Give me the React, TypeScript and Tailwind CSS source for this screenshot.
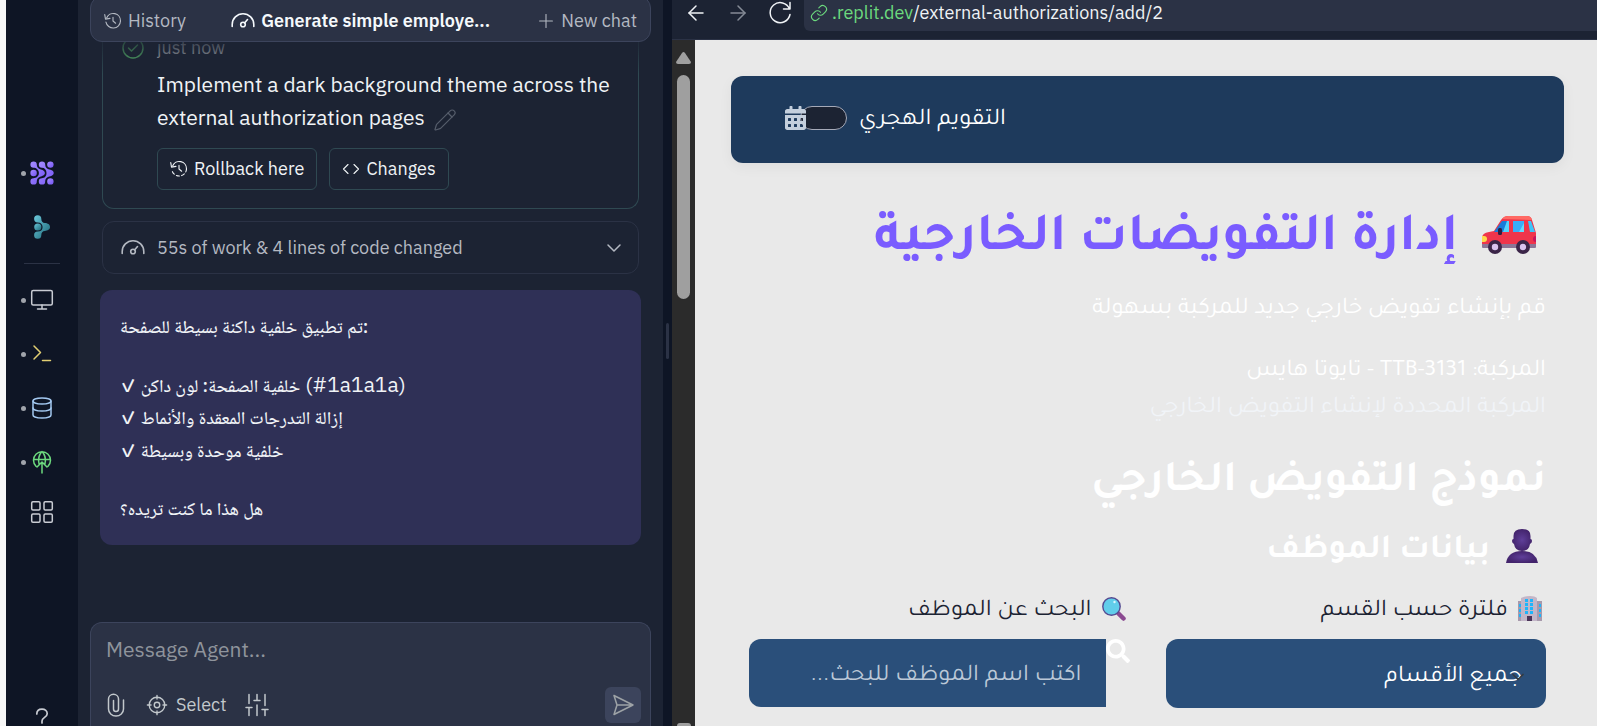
import type { ReactNode, SVGProps } from "react";
import { ArrowLeft, ArrowRight, ChevronDown, Database, Link, Pencil, Plus, RotateCw } from "lucide-react";
import { FaCalendarAlt, FaSearch } from "react-icons/fa";

function Icon({ children, ...props }: SVGProps<SVGSVGElement>) {
  return (
    <svg viewBox="0 0 24 24" fill="none" stroke="currentColor" strokeWidth="1.5" strokeLinecap="round" strokeLinejoin="round" aria-hidden="true" {...props}>
      {children}
    </svg>
  );
}

const HistoryIcon = ({ className, dashed }: { className: string; dashed?: boolean }) => (
  <Icon className={className}>
    <path d="M3.5 8A9.6 9.6 0 0 1 22 12" />
    <path d="M22 12A9.8 9.8 0 0 1 2.600 13.500" strokeDasharray={dashed ? "4 3.2" : undefined} />
    <path d="M1 3.500l1 6 6-1M12 7V12l3.5 3" />
  </Icon>
);

const GaugeIcon = ({ className }: { className: string }) => (
  <Icon className={className} strokeWidth="1.6">
    <path d="M1.200 17.500v-2a10.800 10.800 0 0 1 21.600 0v2" />
    <circle cx="12" cy="15.500" r="2.300" />
    <path d="m13.700 13.800 2.800-3.300" />
  </Icon>
);

const AgentIcon = () => (
  <svg viewBox="0 0 24 24" className="size-6" aria-hidden="true">
    <defs>
      <linearGradient id="agent" x1="0" y1="0" x2="1" y2="1">
        <stop offset="0" stopColor="#a58cff" />
        <stop offset="1" stopColor="#7455f5" />
      </linearGradient>
    </defs>
    <g fill="url(#agent)">
      <path d="M3.6.4a3.2 3.2 0 0 1 3.2 3.2c0 2.4 1.2 3.9 3.3 4.7 2.1.6 4.8 1.5 4.8 3.7s-2.700 3.100-4.800 3.700c-2.100.8-3.300 2.300-3.300 4.700a3.200 3.200 0 1 1-3.200-3.200c2.600 0 5.300-2 5.300-5.200S6.200 6.800 3.600 6.800a3.200 3.200 0 0 1 0-6.400Z" />
      <path d="M12 .4a3.200 3.200 0 0 1 3.200 3.200c0 2.400 1.200 3.900 3.300 4.700 2.500.6 5.200 1.200 5.200 3.700s-2.700 3.100-5.200 3.700c-2.100.8-3.300 2.300-3.300 4.700a3.200 3.200 0 1 1-3.200-3.200c2.600 0 4.500-2 4.500-5.200S14.600 6.800 12 6.800A3.200 3.200 0 0 1 12 .4Z" />
      <circle cx="3.600" cy="12" r="3.200" />
      <circle cx="20.400" cy="3.600" r="3.200" />
      <circle cx="20.400" cy="20.400" r="3.200" />
    </g>
  </svg>
);

const AssistantIcon = () => (
  <svg viewBox="0 0 16 24" className="h-6 w-4" aria-hidden="true">
    <defs>
      <linearGradient id="assistant" x1="0" y1="0" x2="1" y2="1">
        <stop offset="0" stopColor="#6cc9dc" />
        <stop offset="1" stopColor="#1c6675" />
      </linearGradient>
    </defs>
    <g fill="url(#assistant)">
      <path d="M3.700.2a3.600 3.600 0 0 1 3.600 3.600c0 2.500 1.300 4.200 3.500 4.300 2.800.2 5.200 1.400 5.200 3.900s-2.400 3.700-5.200 3.900c-2.200.1-3.500 1.800-3.500 4.300a3.600 3.600 0 1 1-3.600-3.600c3 0 4.900-1.700 4.900-4.600s-1.900-4.600-4.900-4.600a3.600 3.600 0 0 1 0-7.200Z" />
      <circle cx="3.800" cy="12" r="3.600" />
    </g>
  </svg>
);

function RailItem({ label, dot, children }: { label: string; dot?: boolean; children: ReactNode }) {
  return (
    <button aria-label={label} className="relative flex h-[54px] w-full shrink-0 items-center justify-center">
      {dot && <span className="absolute left-[15px] size-[5px] rounded-full bg-[#a0a4ab]" />}
      {children}
    </button>
  );
}

function Rail() {
  return (
    <nav aria-label="Tools" className="flex w-[72px] shrink-0 flex-col bg-[#0e1525] pt-[146px] text-[#c9ccd3]">
      <RailItem label="Agent" dot><AgentIcon /></RailItem>
      <RailItem label="Assistant"><AssistantIcon /></RailItem>
      <hr className="mx-auto my-[9px] w-9 border-[#2b3245]" />
      <RailItem label="Preview" dot><Icon className="size-6"><rect x="1.700" y="2.500" width="20.600" height="14.500" rx="1.500" /><path d="M12 17v4M7.500 21h9" /></Icon></RailItem>
      <RailItem label="Console" dot><Icon className="size-6 text-[#e2cf73]"><path d="m4 4 6.500 6.500L4 17M12.500 18.500h8" /></Icon></RailItem>
      <RailItem label="Database" dot><Database className="size-6 text-[#a3c8f0]" strokeWidth={1.5} /></RailItem>
      <RailItem label="Deployments" dot>
        <Icon className="size-6 text-[#6cd97e]">
          <path d="M6 16.200A8.500 8.500 0 1 1 18 16.200M3.800 9.500h16.400M9.200 14.500C8 9.500 9 4.500 12 1.500c3 3 4 8 2.800 13M12 23V12.500M7 17l5-5 5 5" />
        </Icon>
      </RailItem>
      <div className="-mt-1">
        <RailItem label="All tools"><Icon className="size-6"><rect x="1.700" y="1.700" width="8.300" height="8.300" rx="1.200" /><rect x="14" y="1.700" width="8.300" height="8.300" rx="1.200" /><rect x="1.700" y="14" width="8.300" height="8.300" rx="1.200" /><rect x="14" y="14" width="8.300" height="8.300" rx="1.200" /></Icon></RailItem>
      </div>
      <div className="mt-auto -mb-5">
        <RailItem label="Help"><Icon className="size-6" strokeWidth="1.700"><path d="M6.800 7c0-3 2.200-4.800 5.200-4.800s5.200 1.800 5.200 4.500c0 3.600-5.200 3.800-5.200 7.300V16M12 20.500v.5" /></Icon></RailItem>
      </div>
    </nav>
  );
}

const answers = [
  { text: "خلفية الصفحة: لون داكن", code: "(#1a1a1a)" },
  { text: "إزالة التدرجات المعقدة والأنماط" },
  { text: "خلفية موحدة وبسيطة" },
];

function ChatPanel() {
  return (
    <section aria-label="Agent chat" className="flex w-[585px] shrink-0 flex-col bg-[#1c2333] px-3 font-['IBM_Plex_Sans','Noto_Sans','DejaVu_Sans',sans-serif] text-lg">
      <header className="z-10 -mt-1 flex h-[46px] shrink-0 items-center justify-between rounded-xl border border-[#3c445c] bg-[#2b3245] px-[13px] pt-1 text-[#b4b9c2]">
        <button className="flex items-center gap-1.5"><HistoryIcon className="size-[18px]" />History</button>
        <h1 className="flex items-center gap-1.5 font-semibold text-[#f5f9fc]"><GaugeIcon className="size-6" />Generate simple employe...</h1>
        <button className="flex items-center gap-1"><Plus className="size-[22px]" strokeWidth={1.2} />New chat</button>
      </header>
      <div className="relative flex min-h-0 grow flex-col overflow-hidden px-3">
        <article className="shrink-0 rounded-b-xl border border-t-0 border-[#2f4952] pr-5 pb-[18px] pl-[18px]">
          <div className="-mt-2 flex h-7 items-center gap-3 text-[#b8bdc1]">
            <Icon className="size-6 text-[#5cc470]"><circle cx="12" cy="12" r="10" /><path d="m7.500 12 3 3 6-6" /></Icon>
            just now
          </div>
          <div className="pl-9">
            <p className="pt-1.5 text-[21px] leading-[33px] text-[#f0f3f6]">
              Implement a dark background theme across the external authorization pages
              <button aria-label="Edit" className="ml-2 inline-block align-middle text-[#565d6b]"><Pencil className="size-6" strokeWidth={1.2} /></button>
            </p>
            <div className="mt-3.5 flex gap-3 text-[#f0f3f6]">
              <button className="flex h-[42px] items-center gap-1.5 rounded-md border border-[#2f4952] px-3"><HistoryIcon className="size-[18px]" dashed />Rollback here</button>
              <button className="flex h-[42px] items-center gap-1.5 rounded-md border border-[#2f4952] px-3"><Icon className="size-[18px]"><path d="m8 6-6 6 6 6M16 6l6 6-6 6" /></Icon>Changes</button>
            </div>
          </div>
        </article>
        <button className="mt-3 flex h-[53px] shrink-0 items-center gap-3 rounded-xl border border-[#2b3245] px-[18px] text-[#b4b9c2]">
          <GaugeIcon className="size-6" />
          55s of work &amp; 4 lines of code changed
          <ChevronDown className="-mr-1.5 ml-auto size-6" strokeWidth={1.5} />
        </button>
        <article className="-mx-0.5 mt-4 shrink-0 rounded-xl bg-[#2f3056] px-5 py-5 font-['IBM_Plex_Sans','Noto_Naskh_Arabic','Amiri','DejaVu_Sans',sans-serif] text-lg leading-[33px] font-medium text-[#f0f3f6]">
          <p>تم تطبيق خلفية داكنة بسيطة للصفحة:</p>
          <ul className="my-[25px]">
            {answers.map(({ text, code }) => (
              <li key={text} className="h-[33px]">✓ {text}{code && <span className="text-[21px] font-normal"> {code}</span>}</li>
            ))}
          </ul>
          <p>هل هذا ما كنت تريده؟</p>
        </article>
        <div className="pointer-events-none absolute inset-x-0 top-0 h-8 bg-linear-to-b from-[#1c2333]/80 to-transparent" />
      </div>
      <form className="shrink-0 rounded-t-xl border border-b-0 border-[#3c445c] bg-[#2b3245] px-[15px] pt-2.5">
        <input aria-label="Message Agent" placeholder="Message Agent..." className="block h-8 w-full bg-transparent text-[21px] text-white outline-none placeholder:text-[#8f949c]" />
        <div className="-mr-1.5 mt-[22px] flex h-[39px] items-start text-[#c2c8cc]">
          <button type="button" aria-label="Attach" className="flex h-9 items-center"><Icon className="-ml-0.5 size-6"><path d="M19.500 7v9a7.500 7 0 0 1-15 0V6a5 4.700 0 0 1 10 0v10a2.500 2.500 0 0 1-5 0V7.500" /></Icon></button>
          <button type="button" className="ml-[18px] flex h-9 items-center gap-2">
            <Icon className="size-[22px]"><circle cx="12" cy="12" r="8.500" /><circle cx="12" cy="12" r="3" /><path d="M12 1.500v4M12 18.500v4M1.500 12h4M18.500 12h4" /></Icon>Select
          </button>
          <button type="button" aria-label="Settings" className="ml-[18px] flex h-9 items-center"><Icon className="size-6"><path d="M4 1.500v9M4 15v7.500M12 1.500V7M12 12v10.500M20 1.500v11M20 17v5.500M1 14.500h6M9 7.500h6M17 16.500h6" /></Icon></button>
          <button aria-label="Send" className="ml-auto flex size-9 items-center justify-center rounded-md bg-[#3c445c] text-[#9da2a6]"><Icon className="size-6"><path d="m3 2.500 19 9.500L3 21.500 6 12ZM6 12h16" /></Icon></button>
        </div>
      </form>
    </section>
  );
}

const Car = () => (
  <svg viewBox="0 0 54 38" className="h-[38px] w-[54px]" aria-hidden="true">
    <path d="M19 4Q22 0 26 0h19q4 0 5 4l4 13v12H0V22q0-5 7-6l5-1Z" fill="#ef354b" />
    <path d="M20 3q2-3 6-3h19q4 0 5 4Z" fill="#ff6a64" />
    <path d="M12 16 20 5h7v11Z" fill="#187bd8" /><path d="m21 16 4-11h2v11Z" fill="#55d3fb" />
    <path d="M31 5h11v11H31Z" fill="#39aef8" /><path d="m37 16 5-9v9Z" fill="#65dcfd" /><path d="M46 5h3l4 11h-5Z" fill="#3cc5fa" />
    <path d="M0 28h54v3q0 1-1 1H1q-1 0-1-1Z" fill="#8c7596" />
    <path d="M0 20h2q3 0 3 3t-3 3H0Z" fill="#ffd84a" /><path d="M54 20q-3 0-3 3t3 3Z" fill="#c8145e" />
    <rect x="16" y="12" width="4" height="7" rx="1.500" fill="#302040" />
    <g fill="#3b2548"><circle cx="13" cy="31" r="7" /><circle cx="41" cy="31" r="7" /></g>
    <g fill="#d9c3f0"><circle cx="13" cy="31" r="3.200" /><circle cx="41" cy="31" r="3.200" /></g>
  </svg>
);

const Person = () => (
  <svg viewBox="0 0 32 34" className="mb-2 h-[34px] w-8" aria-hidden="true">
    <defs><radialGradient id="person"><stop offset="0" stopColor="#5f3f99" /><stop offset="1" stopColor="#43246c" /></radialGradient></defs>
    <g fill="url(#person)"><path d="M7.500 7q0-7 8.500-7t8.500 7v3q1.500 0 1.500 2t-2 3q-1 7-8 7t-8-7q-2-1-2-3t1.500-2Z" /><path d="M0 34q2-12 16-12t16 12Z" /></g>
  </svg>
);

const Building = () => (
  <svg viewBox="0 0 24 26" className="h-[26px] w-6" aria-hidden="true">
    <path d="M0 5h5v20H0ZM19 5h5v20h-5Z" fill="#a89aac" /><path d="M3 2Q7 0 12 0t7 2v23H3Z" fill="#c3b6c8" />
    <path d="M7 3h3v3H7Zm5 0h3v3h-3ZM7 7h3v3H7Zm5 0h3v3h-3Zm-5 4h3v3H7Zm5 0h3v3h-3Zm-5 4h3v3H7Zm5 0h3v3h-3ZM1 8h2v3H1Zm0 5h2v3H1Zm0 5h2v3H1ZM21 8h2v3h-2Zm0 5h2v3h-2Zm0 5h2v3h-2Z" fill="#20b5fa" />
    <path d="M9 20h5v5H9Z" fill="#4b3459" />
  </svg>
);

const Magnifier = () => (
  <svg viewBox="0 0 24 24" className="size-6" aria-hidden="true">
    <path d="m16.500 16.500 5 5" stroke="#8b4a91" strokeWidth="4.500" strokeLinecap="round" />
    <circle cx="9.500" cy="9.500" r="8.700" fill="#61cdea" stroke="#544a91" strokeWidth="1.400" /><circle cx="12.500" cy="5" r="1.200" fill="#d9f7ff" />
  </svg>
);

function AuthorizationPage() {
  return (
    <main dir="rtl" className="min-w-0 grow overflow-hidden bg-[#e9e9e9] pt-9 pr-[33px] pl-9 font-['Tajawal','DejaVu_Sans',sans-serif] text-2xl text-white">
      <label className="flex h-[87px] items-center justify-end gap-3 rounded-xl bg-[#1e3a5c] pb-[3px] pl-[54px] shadow-[0_4px_14px_rgba(0,0,0,0.05)]">
        <span className="pt-1.5">التقويم الهجري</span>
        <span className="relative flex h-6 w-[62px]">
          <input type="checkbox" role="switch" className="h-6 w-[47px] appearance-none rounded-full border border-[#a5a9b8] bg-[#1c2333]" />
          <FaCalendarAlt className="absolute left-0 size-6 w-[21px] text-[#c4cfdd]" />
        </span>
      </label>
      <div className="px-[18px]">
        <h1 className="mt-9 flex h-[72px] items-center gap-6 pr-2.5 text-[54px] font-bold text-[#7a5cff]"><Car /><span className="pt-3.5">إدارة التفويضات الخارجية</span></h1>
        <p className="mt-[23px] leading-[33px]">قم بإنشاء تفويض خارجي جديد للمركبة بسهولة</p>
        <p className="mt-[27px] leading-[37px]">المركبة: TTB-3131 - تايوتا هايس</p>
        <p className="leading-[37px] text-[#f1f4f8]">المركبة المحددة لإنشاء التفويض الخارجي</p>
        <h2 className="mt-[26px] text-[44px] leading-[60px] font-bold">نموذج التفويض الخارجي</h2>
        <h3 className="mt-3 flex h-12 items-center gap-4 pr-2 text-[34px] font-bold"><Person /><span className="pt-1.5">بيانات الموظف</span></h3>
        <div className="mt-[19px] grid grid-cols-2 gap-9">
          <div>
            <label htmlFor="department" className="flex h-8 items-center gap-2.5 pr-1 text-[#1c2333]"><Building /><span className="pt-1.5">فلترة حسب القسم</span></label>
            <div className="relative mt-3.5">
              <select id="department" className="h-[69px] w-full appearance-none rounded-xl bg-[#2a4f7a] px-6 pt-2"><option>جميع الأقسام</option></select>
              <ChevronDown className="pointer-events-none absolute top-7 right-[18px] size-5 text-[#343a40]" />
            </div>
          </div>
          <div>
            <label htmlFor="employee" className="flex h-8 items-center gap-2.5 pr-1 text-[#1c2333]"><Magnifier /><span className="pt-1.5">البحث عن الموظف</span></label>
            <div className="mt-3.5 flex">
              <FaSearch className="size-6 shrink-0" />
              <input id="employee" placeholder="اكتب اسم الموظف للبحث..." className="h-[68px] min-w-0 grow rounded-l-xl bg-[#2a4f7a] px-6 pt-2 outline-none placeholder:text-[#bbc8d7]" />
            </div>
          </div>
        </div>
      </div>
    </main>
  );
}

function Preview() {
  return (
    <section aria-label="Preview" className="flex min-w-0 grow flex-col">
      <div className="flex h-10 shrink-0 items-start border-b border-[#2b3245] bg-[#1c2333] pl-3 text-[#f0f3f6]">
        <button aria-label="Back" className="flex h-[26px] items-center"><ArrowLeft className="size-6" strokeWidth={1.5} /></button>
        <button aria-label="Forward" className="ml-[18px] flex h-[26px] items-center text-[#858b96]"><ArrowRight className="size-6" strokeWidth={1.500} /></button>
        <button aria-label="Reload" className="ml-[18px] flex h-[26px] items-center"><Icon className="size-6"><path d="M22 1.500V8h-6.500M21.500 8A10 10 0 1 0 22 13.500" /></Icon></button>
        <a href="#preview" className="ml-3 flex h-[31px] grow items-center gap-1 rounded-bl-md bg-[#2b3245] pb-1.5 pl-1.5 font-['IBM_Plex_Sans','Noto_Sans',sans-serif] text-lg">
          <Link className="size-[18px] text-[#6cd97e]" strokeWidth={1.5} />
          <span><span className="text-[#6cd97e]">.replit.dev</span>/external-authorizations/add/2</span>
        </a>
      </div>
      <div className="flex min-h-0 grow">
        <div className="flex w-[23px] shrink-0 flex-col items-center bg-[#2b2b2b] pt-3">
          <svg viewBox="0 0 15 12" className="h-3 w-[15px] fill-[#9f9f9f]" aria-hidden="true"><path d="M6 1q1.500-2 3 0l6 9q0 2-2 2H2q-2 0-2-2Z" /></svg>
          <div className="mt-[11px] h-56 w-[13px] rounded-full bg-[#9f9f9f]" />
          <div className="mt-auto h-[3px] w-[14px] rounded-t-sm bg-[#9f9f9f]" />
        </div>
        <AuthorizationPage />
      </div>
    </section>
  );
}

export default function App() {
  return (
    <div className="flex h-screen overflow-hidden border-l-6 border-[#f7f7f7] bg-[#0e1525]">
      <Rail />
      <ChatPanel />
      <div role="separator" className="flex w-[9px] shrink-0 items-center justify-center pb-11"><span className="h-9 w-[3px] rounded-full bg-[#2b3245]" /></div>
      <Preview />
    </div>
  );
}
